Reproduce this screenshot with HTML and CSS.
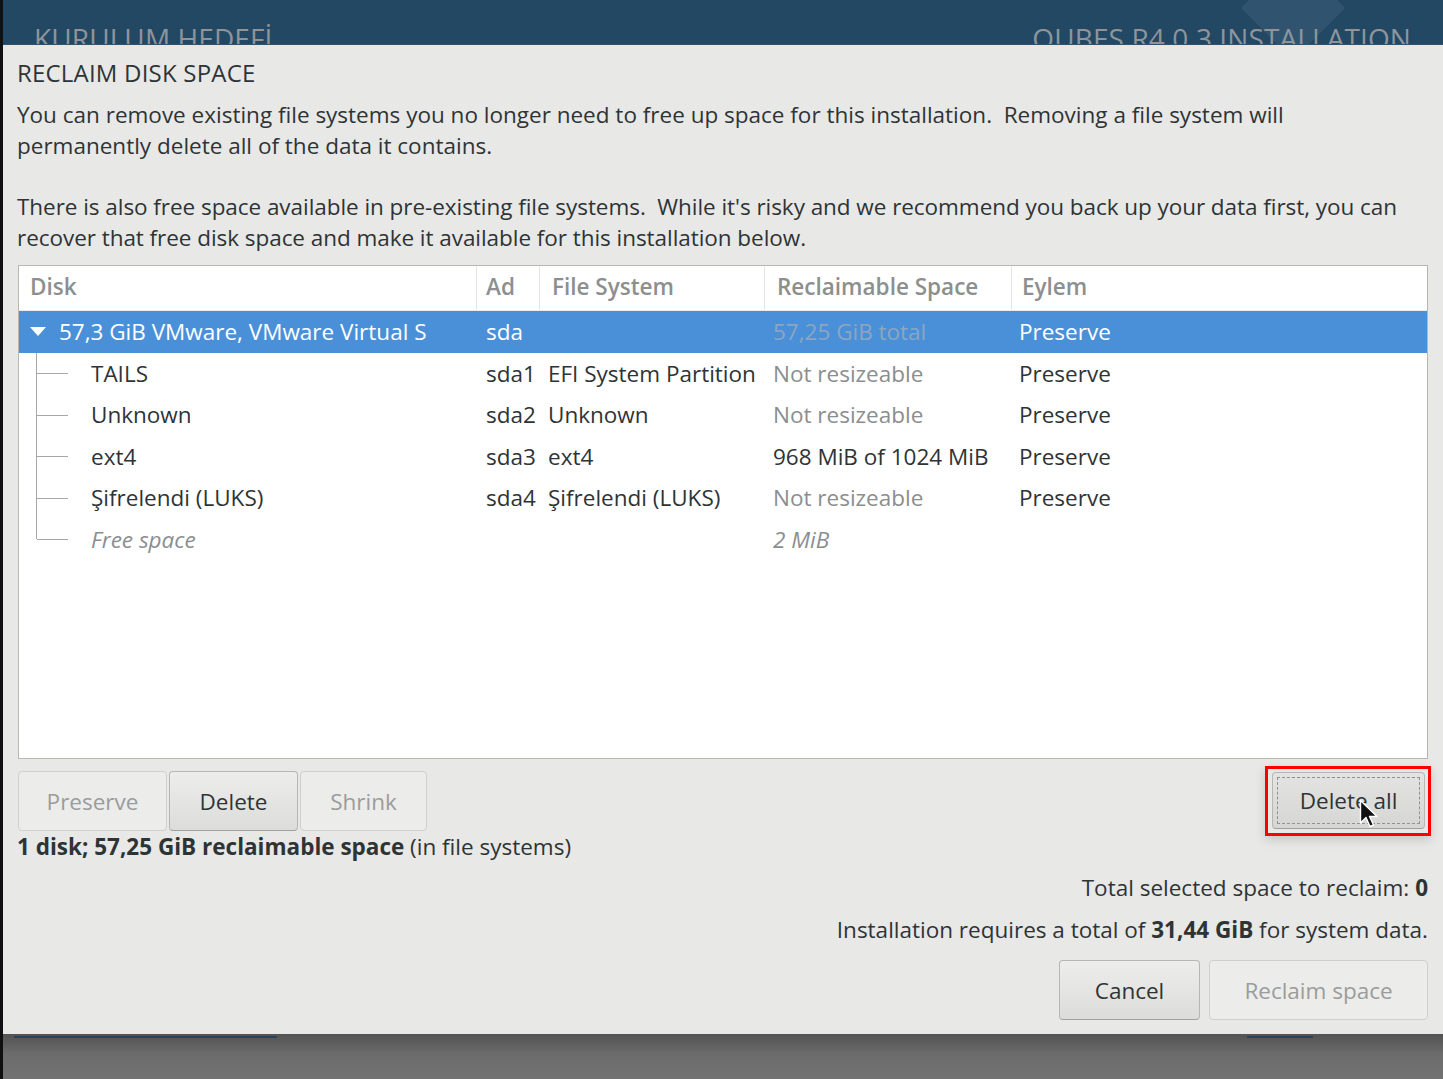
FILE: index.html
```html
<!DOCTYPE html>
<html>
<head>
<meta charset="utf-8">
<link rel="stylesheet" href="styles.css">
</head>
<body>
<div class="screen">
  <header class="topbar">
    <span class="spoke-title">KURULUM HEDEFİ</span>
    <svg class="logo" width="120" height="60" viewBox="0 0 120 60"><polygon points="60,-45 112,8 60,60 8,8" fill="#3d6079" opacity="0.5"/></svg>
    <span class="product-title">QUBES R4.0.3 INSTALLATION</span>
  </header>

  <section class="dialog">
    <h1 class="title">RECLAIM DISK SPACE</h1>
    <p class="para p1">You can remove existing file systems you no longer need to free up space for this installation.&nbsp; Removing a file system will permanently delete all of the data it contains.</p>
    <p class="para p2">There is also free space available in pre-existing file systems.&nbsp; While it's risky and we recommend you back up your data first, you can recover that free disk space and make it available for this installation below.</p>

    <div class="table">
      <div class="row head">
        <div class="cell">Disk</div>
        <div class="cell">Ad</div>
        <div class="cell">File System</div>
        <div class="cell">Reclaimable Space</div>
        <div class="cell">Eylem</div>
      </div>
      <div class="row selected">
        <div class="cell disk"><span class="expander"></span>57,3 GiB VMware, VMware Virtual S</div>
        <div class="cell">sda</div>
        <div class="cell"></div>
        <div class="cell dimsel">57,25 GiB total</div>
        <div class="cell">Preserve</div>
      </div>
      <div class="row child">
        <div class="cell disk"><span class="tree"></span>TAILS</div>
        <div class="cell">sda1</div>
        <div class="cell">EFI System Partition</div>
        <div class="cell dim">Not resizeable</div>
        <div class="cell">Preserve</div>
      </div>
      <div class="row child">
        <div class="cell disk"><span class="tree"></span>Unknown</div>
        <div class="cell">sda2</div>
        <div class="cell">Unknown</div>
        <div class="cell dim">Not resizeable</div>
        <div class="cell">Preserve</div>
      </div>
      <div class="row child">
        <div class="cell disk"><span class="tree"></span>ext4</div>
        <div class="cell">sda3</div>
        <div class="cell">ext4</div>
        <div class="cell">968 MiB of 1024 MiB</div>
        <div class="cell">Preserve</div>
      </div>
      <div class="row child">
        <div class="cell disk"><span class="tree"></span>Şifrelendi (LUKS)</div>
        <div class="cell">sda4</div>
        <div class="cell">Şifrelendi (LUKS)</div>
        <div class="cell dim">Not resizeable</div>
        <div class="cell">Preserve</div>
      </div>
      <div class="row child last">
        <div class="cell disk free"><span class="tree"></span>Free space</div>
        <div class="cell"></div>
        <div class="cell"></div>
        <div class="cell dim free">2 MiB</div>
        <div class="cell"></div>
      </div>
    </div>

    <div class="actions">
      <div class="btn-group">
        <button class="btn insensitive b-preserve">Preserve</button>
        <button class="btn b-delete">Delete</button>
        <button class="btn insensitive b-shrink">Shrink</button>
      </div>
      <div class="highlight">
        <button class="btn focused b-deleteall">Delete all</button>
        <svg class="cursor" width="20" height="30" viewBox="0 0 20 30"><path d="M1.5 1.5 L1.5 24 L7 18.5 L11 27.5 L14.5 26 L10.5 17.5 L18 17.5 Z" fill="#111" stroke="#fff" stroke-width="1.4" stroke-linejoin="round"/></svg>
      </div>
    </div>

    <p class="summary"><b>1 disk; 57,25 GiB reclaimable space</b> (in file systems)</p>
    <p class="total">Total selected space to reclaim: <b>0</b></p>
    <p class="require">Installation requires a total of <b>31,44 GiB</b> for system data.</p>

    <div class="footer-buttons">
      <button class="btn b-cancel">Cancel</button>
      <button class="btn insensitive b-reclaim">Reclaim space</button>
    </div>
  </section>

  <footer class="under">
    <span class="line l1"></span>
    <span class="line l2"></span>
  </footer>
</div>
</body>
</html>
```

FILE: styles.css
```css
* { box-sizing: border-box; }
html, body { margin: 0; padding: 0; }
body {
  width: 1443px;
  height: 1079px;
  overflow: hidden;
  background: #101010;
  font-family: "Open Sans", "Noto Sans", sans-serif;
  color: #2e3436;
}
.screen {
  margin-left: 3px;
  width: 1440px;
  height: 1079px;
  display: flex;
  flex-direction: column;
}
.topbar {
  height: 45px;
  flex: none;
  background: #234864;
  position: relative;
  overflow: hidden;
  display: flex;
  justify-content: space-between;
  padding: 0 32px 0 31px;
  border-bottom: 1px solid #30526d;
}
.spoke-title, .product-title {
  font-size: 28px;
  color: #8e949a;
  padding-top: 22px;
  line-height: 32px;
  letter-spacing: 0.1px;
}
.logo {
  position: absolute;
  right: 90px;
  top: 0;
}
.product-title { position: relative; }
.dialog {
  flex: none;
  height: 989px;
  background: #e8e8e7;
  padding: 0 13px 0 14px;
  display: flex;
  flex-direction: column;
}
.title {
  margin: 12px 0 0 0;
  font-size: 24px;
  font-weight: 400;
  line-height: 32px;
  letter-spacing: 0.2px;
}
.para {
  margin: 0;
  font-size: 22.5px;
  line-height: 31px;
}
.p1 { margin-top: 10px; max-width: 1290px; }
.p2 { margin-top: 30px; letter-spacing: -0.05px; }
.table {
  margin-top: 12px;
  margin-left: 1px;
  width: 1410px;
  height: 494px;
  background: #fff;
  border: 1px solid #b6b6b3;
  font-size: 22.5px;
}
.row {
  display: grid;
  grid-template-columns: 458px 63px 225px 247px 1fr;
  align-items: center;
  height: 41.5px;
}
.row.head {
  height: 45px;
  color: #8d8f8f;
  font-weight: 600;
  border-bottom: 1px solid #ececec;
}
.row.head .cell {
  height: 100%;
  display: flex;
  align-items: center;
  padding-left: 12px;
  padding-bottom: 3px;
  border-right: 1px solid #e6e6e6;
}
.row.head .cell:first-child { padding-left: 11px; }
.row.head .cell:last-child { border-right: none; padding-left: 10px; }
.cell {
  padding-left: 8px;
  white-space: nowrap;
  overflow: hidden;
}
.row .cell:nth-child(2) { padding-left: 9px; }
.row .cell:nth-child(5) { padding-left: 7px; }
.row.selected {
  background: #4a90d9;
  color: #fff;
}
.row.selected .disk {
  padding-left: 11px;
  display: flex;
  align-items: center;
}
.expander {
  width: 0; height: 0;
  border-left: 8px solid transparent;
  border-right: 8px solid transparent;
  border-top: 9px solid #fff;
  margin-right: 13px;
}
.dimsel { color: #8ea5bf; }
.dim { color: #8b8e8f; }
.free { font-style: italic; color: #8b8e8f; }
.row.child .disk {
  position: relative;
  height: 100%;
  display: flex;
  align-items: center;
  padding-left: 72px;
}
.tree {
  position: absolute;
  left: 17px;
  top: 0;
  bottom: 0;
  width: 32px;
  border-left: 1px solid #a7a7a7;
}
.tree::after {
  content: "";
  position: absolute;
  left: 0;
  right: 0;
  top: 50%;
  border-top: 1px solid #a7a7a7;
}
.row.last .tree { bottom: 50%; }
.row.last .tree::after { top: 100%; }

.actions {
  margin-top: 12px;
  display: flex;
  justify-content: space-between;
  align-items: flex-start;
  height: 60px;
}
.btn-group { display: flex; gap: 2px; margin-left: 1px; }
.btn {
  font-family: inherit;
  font-size: 22.5px;
  color: #2e3436;
  height: 60px;
  border: 1px solid #b6b6b3;
  border-bottom-color: #a1a1a0;
  border-radius: 4px;
  background: linear-gradient(#ededec, #dcdcdb);
  padding: 0;
}
.btn.insensitive {
  background: #ececeb;
  color: #9a9c9c;
  border-color: #cfcfcc;
}
.b-preserve { width: 149px; }
.b-delete { width: 129px; }
.b-shrink { width: 127px; }
.highlight {
  position: relative;
  margin-top: -5px;
  border: 3px solid #f00;
  padding: 3px 3px 4px 4px;
  margin-right: -1px;
  box-shadow: 0 4px 10px rgba(0,0,0,0.15);
}
.b-deleteall {
  width: 153px;
  height: 57px;
  display: block;
  position: relative;
  background: linear-gradient(#e3e3e2, #d6d6d5);
}
.b-deleteall::after {
  content: "";
  position: absolute;
  inset: 4px;
  border: 1px dashed #8f9192;
}
.cursor {
  position: absolute;
  left: 91px;
  top: 30px;
}
.summary {
  margin: 1px 0 0 0;
  font-size: 22.5px;
  line-height: 30px;
}
.summary b, .total b, .require b { font-weight: 700; }
.total, .require {
  margin: 0;
  text-align: right;
  font-size: 22.5px;
  line-height: 30px;
  padding-right: 2px;
}
.total { margin-top: 11px; }
.require { margin-top: 12px; }
.footer-buttons {
  margin-top: 15px;
  display: flex;
  justify-content: flex-end;
  gap: 9px;
  padding-right: 2px;
}
.b-cancel { width: 141px; }
.b-reclaim { width: 219px; }

.under {
  flex: 1;
  position: relative;
  background: linear-gradient(#535353 0px, #5c5c5c 8px, #6c6c6c 20px, #727272 44px);
}
.line {
  position: absolute;
  top: 2px;
  height: 2px;
  background: #2a4159;
}
.l1 { left: 11px; width: 263px; }
.l2 { left: 1244px; width: 66px; }
```
